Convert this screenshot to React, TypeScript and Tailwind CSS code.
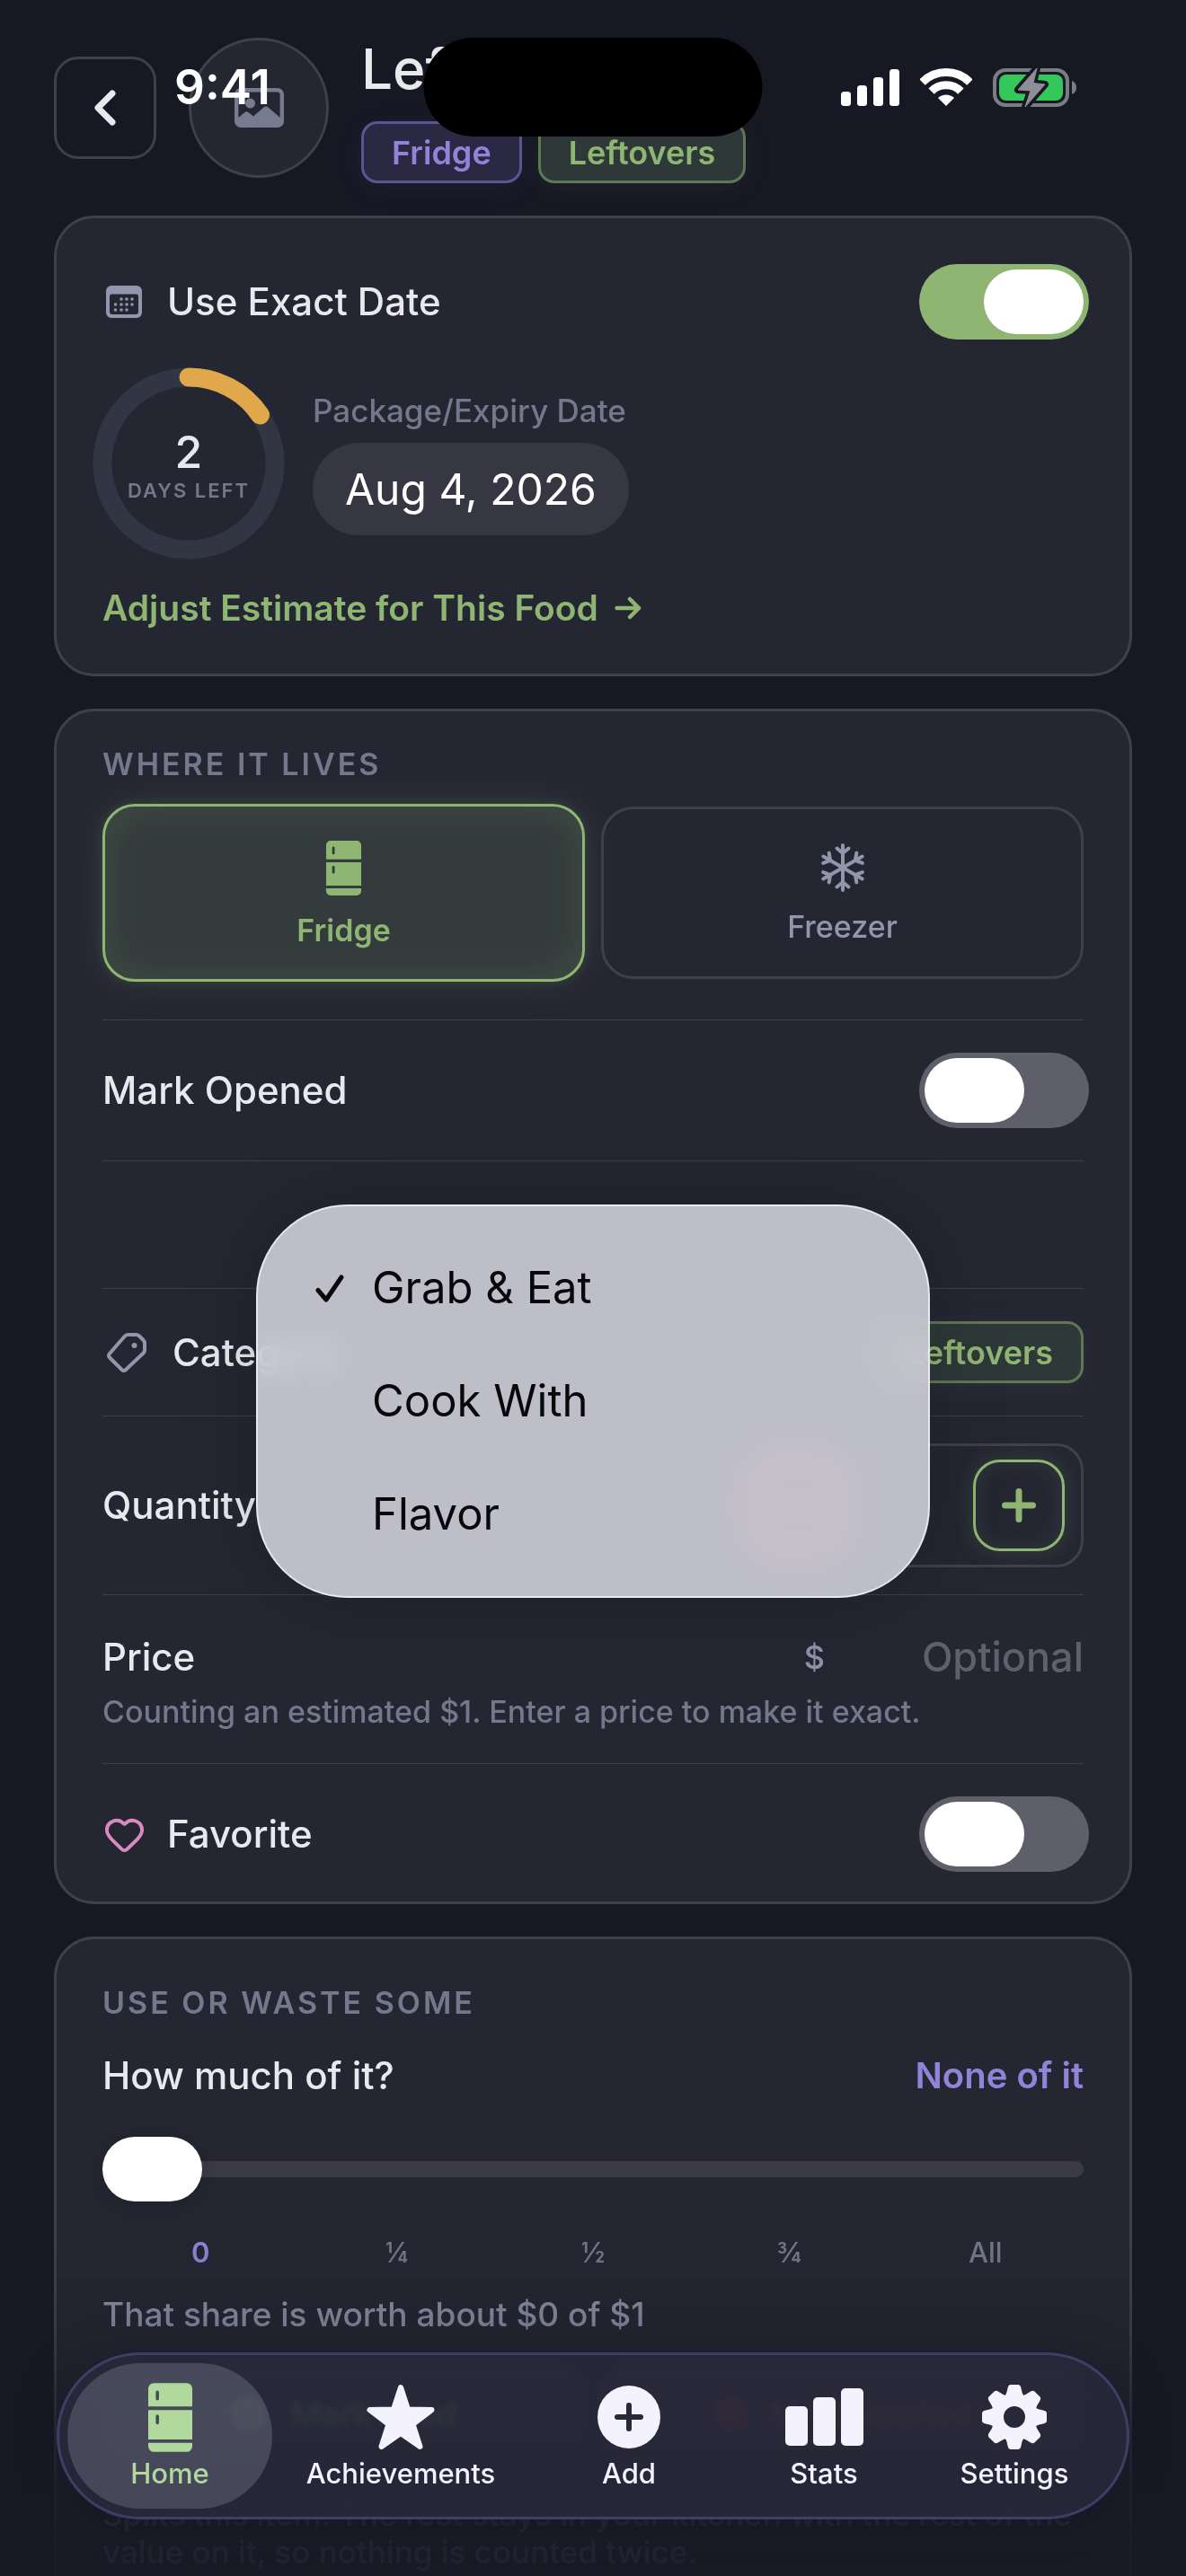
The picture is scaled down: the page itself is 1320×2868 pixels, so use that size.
import { useState } from "react";
import type { ReactNode } from "react";
import { Heart } from "lucide-react";

const MENU_OPTIONS = ["Grab & Eat", "Cook With", "Flavor"];
const SHARE_STEPS = ["0", "¼", "½", "¾", "All"];

function FridgeIcon({ className }: { className: string }) {
  return (
    <svg viewBox="0 0 39 61" className={className} fill="currentColor" fillRule="evenodd" aria-hidden="true">
      <path d="M5 0h29a5 5 0 0 1 5 5v15.7H0V5a5 5 0 0 1 5-5zM6.7 8v6a1.4 1.4 0 0 0 2.8 0V8a1.4 1.4 0 0 0-2.8 0z" />
      <path d="M0 24h39v26H0zM6.7 29.3v6a1.4 1.4 0 0 0 2.8 0v-6a1.4 1.4 0 0 0-2.8 0z" />
      <path d="M0 53h39v3a5 5 0 0 1-5 5H5a5 5 0 0 1-5-5z" />
    </svg>
  );
}

function SnowflakeIcon() {
  return (
    <svg viewBox="-27 -27 54 54" className="h-[54px] w-[54px]" fill="none" stroke="currentColor" strokeWidth="4" strokeLinecap="round" aria-hidden="true">
      {[0, 60, 120, 180, 240, 300].map((angle) => (
        <path key={angle} transform={`rotate(${angle})`} d="M0-1V-25M-6.5-21.5 0-16 6.5-21.5" />
      ))}
    </svg>
  );
}

function PhotoIcon() {
  return (
    <svg viewBox="0 0 55 44" className="h-[44px] w-[55px]" aria-hidden="true">
      <rect x="2.2" y="2.2" width="50.6" height="39.6" rx="5" fill="none" stroke="currentColor" strokeWidth="4.4" />
      <circle cx="17.5" cy="17" r="5.5" fill="currentColor" />
      <path fill="currentColor" d="M3 34 11.5 27Q13.5 25.5 15.5 27L21 31.5 32.5 21.5Q35 19.5 37.5 21.5L52 34v6a3 3 0 0 1-3 2H6a3 3 0 0 1-3-2z" />
    </svg>
  );
}

function CalendarIcon() {
  const dots = [[17, 15], [23, 15], [29, 15], [10.5, 21], [17, 21], [23, 21], [29, 21], [10.5, 27], [17, 27], [23, 27]];
  return (
    <svg viewBox="0 0 40 36" className="h-[36px] w-[40px] text-[#9296ac]" fill="currentColor" aria-hidden="true">
      <path fillRule="evenodd" d="M6 0h28a6 6 0 0 1 6 6v24a6 6 0 0 1-6 6H6a6 6 0 0 1-6-6V6a6 6 0 0 1 6-6zM6.5 9.5a2.5 2.5 0 0 0-2.5 2.5v17a3 3 0 0 0 3 3h26a3 3 0 0 0 3-3V12a2.5 2.5 0 0 0-2.5-2.5z" />
      {dots.map(([x, y]) => (
        <circle key={`${x}-${y}`} cx={x} cy={y} r="1.8" />
      ))}
    </svg>
  );
}

function TagIcon() {
  return (
    <svg viewBox="0 0 44 44" className="h-[44px] w-[54px] text-[#9296ac]" fill="none" stroke="currentColor" strokeWidth="4" strokeLinejoin="round" aria-hidden="true">
      <path d="M23.5 2H32.5Q34.5 2 36 3.5L40.5 8Q42 9.5 42 11.5V19Q42 21 40.5 22.5L21 41Q18.8 43 16.6 41L3 27.5Q1 25.2 3 23L19.5 4Q21.2 2 23.5 2z" />
      <circle cx="30.5" cy="14" r="3" fill="currentColor" stroke="none" />
    </svg>
  );
}

function GearIcon() {
  return (
    <svg viewBox="-36 -36 72 72" className="h-[72px] w-[72px]" aria-hidden="true">
      <circle r="19" fill="none" stroke="currentColor" strokeWidth="14" />
      {[0, 45, 90, 135, 180, 225, 270, 315].map((angle) => (
        <path key={angle} transform={`rotate(${angle})`} fill="currentColor" d="M-10.5-23Q-8.5-26-7.5-32-6.8-36-4-36H4Q6.8-36 7.5-32 8.5-26 10.5-23z" />
      ))}
    </svg>
  );
}

function StarIcon() {
  return (
    <svg viewBox="0 0 76 74" className="h-[74px] w-[76px]" fill="currentColor" stroke="currentColor" strokeWidth="6" strokeLinejoin="round" aria-hidden="true">
      <path d="M38 4 46 28.5 72.5 29 51.5 45 59.5 70 38 55 16.5 70 24.5 45 3.5 29 30 28.5z" />
    </svg>
  );
}

function AddIcon() {
  return (
    <svg viewBox="0 0 70 70" className="h-[70px] w-[70px]" aria-hidden="true">
      <circle cx="35" cy="35" r="35" fill="currentColor" />
      <path d="M35 22V48M22 35H48" stroke="#272839" strokeWidth="6" strokeLinecap="round" />
    </svg>
  );
}

function BarsIcon() {
  return (
    <svg viewBox="0 0 87 64" className="h-[64px] w-[87px]" fill="currentColor" aria-hidden="true">
      <rect y="20" width="25" height="44" rx="5" />
      <rect x="31" y="10" width="25" height="54" rx="5" />
      <rect x="62" width="25" height="64" rx="5" />
    </svg>
  );
}

function StatusBar() {
  return (
    <div className="absolute inset-x-0 top-[42px] z-30 flex h-[110px] items-center justify-between pr-[122px] pl-[194px]">
      <span className="text-[53px] leading-[60px] font-semibold text-white">9:41</span>
      <div className="absolute left-1/2 h-[110px] w-[377px] -translate-x-1/2 rounded-full bg-black" />
      <div className="flex items-center gap-[23px]">
        <svg viewBox="0 0 65 41" className="h-[41px] w-[65px]" fill="white" aria-hidden="true">
          <rect y="25" width="11" height="16" rx="3.5" />
          <rect x="18" y="18" width="11" height="23" rx="3.5" />
          <rect x="36" y="9" width="11" height="32" rx="3.5" />
          <rect x="54" width="11" height="41" rx="3.5" />
        </svg>
        <svg viewBox="0 0 58 42" className="h-[42px] w-[58px]" fill="none" stroke="white" strokeWidth="9" aria-hidden="true">
          <path d="M2.5 15.5A37.5 37.5 0 0 1 55.5 15.5" />
          <path d="M12.6 25.6A23.2 23.2 0 0 1 45.4 25.6" />
          <path d="M29 42 20 33A13 13 0 0 1 38 33z" fill="white" stroke="none" />
        </svg>
        <svg viewBox="0 0 93 45" className="h-[45px] w-[93px]" aria-hidden="true">
          <rect x="2" y="3" width="81" height="39" rx="12" fill="none" stroke="#7c7c86" strokeWidth="4" />
          <rect x="7" y="8" width="71" height="29" rx="8" fill="#34c759" />
          <path d="M88 15Q93 17 93 22.5T88 30z" fill="#7c7c86" />
          <path d="M49 1 28 25 42 26 36 44 58 19 45 17.5z" fill="#8e8e96" stroke="#161824" strokeWidth="8" strokeLinejoin="round" />
          <path d="M49 1 28 25 42 26 36 44 58 19 45 17.5z" fill="#8e8e96" stroke="#8e8e96" strokeWidth="1" strokeLinejoin="round" />
        </svg>
      </div>
    </div>
  );
}

function Chip({ tone, children }: { tone: "purple" | "green"; children: ReactNode }) {
  const tones = {
    purple: "border-[#5d558f] bg-[#2a2842] text-[#9184d8] shadow-[0_6px_30px_rgba(145,132,216,0.08)]",
    green: "border-[#5d7852] bg-[#2f3838] text-[#8fb573] shadow-[0_6px_30px_rgba(143,181,115,0.08)]",
  };
  return (
    <span className={`flex h-[69px] items-center rounded-[18px] border-[3px] px-[31px] text-[36px] font-semibold ${tones[tone]}`}>
      {children}
    </span>
  );
}

function Toggle({ id, defaultChecked }: { id: string; defaultChecked?: boolean }) {
  return (
    <input
      id={id}
      type="checkbox"
      role="switch"
      defaultChecked={defaultChecked}
      className="relative -mr-1.5 h-[84px] w-[189px] shrink-0 appearance-none rounded-full bg-[#5f5f6b] before:absolute before:top-1.5 before:left-1.5 before:h-[72px] before:w-[111px] before:rounded-full before:bg-white checked:bg-[#8fb573] checked:before:left-[72px]"
    />
  );
}

function Card({ className, children }: { className: string; children: ReactNode }) {
  return (
    <section className={`rounded-[45px] border-[3px] border-[#3f404c] bg-[#242632] px-[51px] ${className}`}>
      {children}
    </section>
  );
}

function SectionTitle({ children }: { children: ReactNode }) {
  return <h2 className="text-[34px] leading-[39px] font-semibold tracking-[3px] text-[#74788c] uppercase">{children}</h2>;
}

function Row({ className = "py-9", children }: { className?: string; children: ReactNode }) {
  return <div className={`flex items-center justify-between border-t border-[#3d3e4a] ${className}`}>{children}</div>;
}

const labelText = "text-[42px] leading-[48px] font-medium text-[#e9e8ed]";

function RowLabel({ htmlFor, icon, children }: { htmlFor?: string; icon: ReactNode; children: ReactNode }) {
  return (
    <label htmlFor={htmlFor} className={`flex items-center gap-6 ${labelText}`}>
      <span className="flex min-w-12 justify-center">{icon}</span>
      {children}
    </label>
  );
}

function DaysRing() {
  return (
    <div className="relative h-[192px] w-[192px] shrink-0">
      <svg viewBox="-96 -96 192 192" className="h-full w-full overflow-visible" fill="none" strokeWidth="21" aria-hidden="true">
        <circle r="96" stroke="#323543" />
        <path d="M0-96A96 96 0 0 1 79.5-54" stroke="#e0a84a" strokeLinecap="round" />
      </svg>
      <div className="absolute inset-0 flex flex-col items-center pt-[56px]">
        <span className="text-[50px] leading-[54px] font-medium text-[#e9e8ed]">2</span>
        <span className="text-[22px] leading-[33px] font-semibold tracking-[2px] text-[#74788c]">DAYS LEFT</span>
      </div>
    </div>
  );
}

function OptionMenu() {
  const [selected, setSelected] = useState("Grab & Eat");
  return (
    <div
      role="menu"
      className="absolute top-12 left-1/2 z-10 w-[750px] -translate-x-1/2 rounded-[102px] border-2 border-[#e8e8f0] bg-[#d4d4dd]/88 py-7 shadow-[0_0_90px_rgba(0,0,0,0.18)] backdrop-blur-[14px] backdrop-saturate-150"
    >
      {MENU_OPTIONS.map((option) => (
        <button
          key={option}
          role="menuitemradio"
          aria-checked={option === selected}
          onClick={() => setSelected(option)}
          className="flex h-[126px] w-full items-center pl-[64px] text-left text-[49px] text-[#08080a]"
        >
          <span className="w-[63px]">
            {option === selected && (
              <svg viewBox="0 0 32 31" className="h-[31px] w-[32px]" fill="none" stroke="currentColor" strokeWidth="5" strokeLinecap="round" strokeLinejoin="round" aria-hidden="true">
                <path d="M3 17.5 12 28 29 3" />
              </svg>
            )}
          </span>
          {option}
        </button>
      ))}
    </div>
  );
}

function Stepper() {
  const button = "flex h-[102px] w-[102px] items-center justify-center rounded-[30px] border-[3px]";
  return (
    <div className="flex h-[138px] w-[391px] items-center justify-between rounded-[30px] border-[3px] border-[#3f404c] px-[18px]">
      <button aria-label="Decrease" className={`${button} border-[#f0635a] bg-[#f0635a]/10 text-[#f0635a] shadow-[0_0_36px_rgba(240,99,90,0.4),inset_0_0_24px_rgba(240,99,90,0.3)]`}>
        <svg viewBox="0 0 38 38" className="h-[38px] w-[38px]" stroke="currentColor" strokeWidth="7" strokeLinecap="round" aria-hidden="true">
          <path d="M3.5 19H34.5" />
        </svg>
      </button>
      <button aria-label="Increase" className={`${button} border-[#8fb573] text-[#8fb573] shadow-[0_0_24px_rgba(143,181,115,0.18),inset_0_0_24px_rgba(143,181,115,0.12)]`}>
        <svg viewBox="0 0 38 38" className="h-[38px] w-[38px]" stroke="currentColor" strokeWidth="7" strokeLinecap="round" aria-hidden="true">
          <path d="M19 3.5V34.5M3.5 19H34.5" />
        </svg>
      </button>
    </div>
  );
}

function TabBar() {
  const tabs = [
    { name: "Home", icon: <FridgeIcon className="h-[77px] w-[49px]" /> },
    { name: "Achievements", icon: <StarIcon /> },
    { name: "Add", icon: <AddIcon /> },
    { name: "Stats", icon: <BarsIcon /> },
    { name: "Settings", icon: <GearIcon /> },
  ];
  return (
    <nav className="absolute inset-x-[63px] bottom-[63px] z-20 grid grid-cols-[228fr_286fr_222fr_212fr_212fr] rounded-full border-[3px] border-[#3d4066] bg-[#28293b]/85 py-[9px] pr-[19px] pl-[9px] shadow-[0_0_60px_rgba(0,0,0,0.15)] backdrop-blur-[3px]">
      {tabs.map((tab) => (
        <a
          key={tab.name}
          href="#"
          aria-current={tab.name === "Home" ? "page" : undefined}
          className="flex h-[162px] flex-col items-center justify-center gap-1.5 rounded-full text-[#f3f2fd] aria-[current=page]:bg-[#c8cce0]/20 aria-[current=page]:text-[#b1d99d]"
        >
          <span className="flex h-[78px] items-center">{tab.icon}</span>
          <span className="text-[31px] leading-[36px] font-medium">{tab.name}</span>
        </a>
      ))}
    </nav>
  );
}

export default function App() {
  const [place, setPlace] = useState("Fridge");
  const places = [
    { name: "Fridge", icon: <FridgeIcon className="h-[61px] w-[39px]" /> },
    { name: "Freezer", icon: <SnowflakeIcon /> },
  ];

  return (
    <div className="relative h-screen overflow-hidden bg-[#161824] font-['Inter',sans-serif]">
      <StatusBar />

      <main className="flex flex-col gap-9 px-[60px] pt-9">
        <header className="flex items-center gap-9">
          <button aria-label="Back" className="flex h-[114px] w-[114px] items-center justify-center rounded-[27px] border-[3px] border-[#3f404c] text-[#e9e8ed]">
            <svg viewBox="0 0 24 40" className="h-[40px] w-[24px]" fill="none" stroke="currentColor" strokeWidth="7" strokeLinecap="round" strokeLinejoin="round" aria-hidden="true">
              <path d="M20 4 4 20 20 36" />
            </svg>
          </button>
          <div className="flex h-[156px] w-[156px] items-center justify-center rounded-full border-[3px] border-[#3f404c] bg-[#242632] text-[#767b8f]">
            <PhotoIcon />
          </div>
          <div>
            <h1 className="text-[62px] leading-[81px] font-medium text-[#e9e8ed]">Leftovers</h1>
            <div className="mt-[18px] flex gap-[18px]">
              <Chip tone="purple">Fridge</Chip>
              <Chip tone="green">Leftovers</Chip>
            </div>
          </div>
        </header>

        <Card className="flex flex-col gap-[42px] py-[51px]">
          <div className="flex items-center justify-between">
            <RowLabel htmlFor="exact-date" icon={<CalendarIcon />}>Use Exact Date</RowLabel>
            <Toggle id="exact-date" defaultChecked />
          </div>
          <div className="flex items-center gap-[42px]">
            <DaysRing />
            <div className="flex flex-col items-start gap-[15px]">
              <span className="text-[35px] leading-[42px] font-medium text-[#74788c]">Package/Expiry Date</span>
              <button className="h-[103px] rounded-full bg-[#363743] px-9 text-[48px] text-white">Aug 4, 2026</button>
            </div>
          </div>
          <a href="#" className="flex items-center gap-[18px] text-[39px] leading-[45px] font-semibold text-[#8fb573]">
            Adjust Estimate for This Food
            <svg viewBox="0 0 30 26" className="h-[26px] w-[30px]" fill="none" stroke="currentColor" strokeWidth="4.5" strokeLinecap="round" strokeLinejoin="round" aria-hidden="true">
              <path d="M2.5 13H27M17 3 27 13 17 23" />
            </svg>
          </a>
        </Card>

        <Card className="pt-[39px]">
          <SectionTitle>Where it lives</SectionTitle>
          <div className="mt-[25px] mb-[42px] grid grid-cols-2 items-center gap-[18px]">
            {places.map((item) => (
              <button
                key={item.name}
                aria-pressed={place === item.name}
                onClick={() => setPlace(item.name)}
                className="flex h-[192px] flex-col items-center justify-center gap-[18px] rounded-[36px] border-[3px] border-[#3f404c] pt-1 text-[34px] leading-[42px] font-medium text-[#9296ac] aria-pressed:h-[198px] aria-pressed:border-[#8fb573] aria-pressed:bg-[#333b3c] aria-pressed:font-semibold aria-pressed:text-[#8fb573] aria-pressed:shadow-[0_0_45px_rgba(143,181,115,0.14),0_0_12px_rgba(143,181,115,0.16),inset_0_0_45px_rgba(143,181,115,0.16)]"
              >
                {item.icon}
                {item.name}
              </button>
            ))}
          </div>

          <Row>
            <label htmlFor="opened" className={labelText}>Mark Opened</label>
            <Toggle id="opened" />
          </Row>
          <Row className="relative h-[142px]">
            <OptionMenu />
          </Row>
          <Row>
            <RowLabel icon={<TagIcon />}>Category</RowLabel>
            <Chip tone="green">Leftovers</Chip>
          </Row>
          <Row className="py-[30px]">
            <span className={labelText}>Quantity</span>
            <Stepper />
          </Row>
          <div className="border-t border-[#3d3e4a] py-9">
            <div className="flex h-[66px] items-center">
              <label htmlFor="price" className={`grow ${labelText}`}>Price</label>
              <span className="mr-[18px] text-[36px] font-medium text-[#8e92a8]">$</span>
              <input id="price" placeholder="Optional" className="w-[270px] bg-transparent text-right text-[45px] font-medium outline-none placeholder:text-[#5f606c]" />
            </div>
            <p className="mt-[7px] text-[34px] leading-[42px] font-medium text-[#74788c]">
              Counting an estimated $1. Enter a price to make it exact.
            </p>
          </div>
          <Row className="pt-9 pb-[33px]">
            <RowLabel htmlFor="favorite" icon={<Heart className="h-[47px] w-[47px] text-[#d98bbf]" />}>Favorite</RowLabel>
            <Toggle id="favorite" />
          </Row>
        </Card>

        <Card className="py-[51px]">
          <SectionTitle>Use or waste some</SectionTitle>
          <div className="mt-[38px] flex items-center justify-between">
            <label htmlFor="share" className={labelText}>How much of it?</label>
            <span className="text-[40px] leading-[48px] font-semibold text-[#9184d8]">None of it</span>
          </div>
          <div className="mt-11 flex h-[72px] items-center">
            <input
              id="share"
              type="range"
              min={0}
              max={4}
              defaultValue={0}
              className="h-[18px] w-full appearance-none rounded-full bg-[#3b3a46] [&::-webkit-slider-thumb]:h-[72px] [&::-webkit-slider-thumb]:w-[111px] [&::-webkit-slider-thumb]:appearance-none [&::-webkit-slider-thumb]:rounded-full [&::-webkit-slider-thumb]:bg-white [&::-webkit-slider-thumb]:shadow-[0_6px_30px_rgba(0,0,0,0.15)]"
            />
          </div>
          <div className="mt-[39px] grid grid-cols-5 text-center text-[31px] leading-[36px] font-medium text-[#74788c]">
            {SHARE_STEPS.map((step) => (
              <span key={step} className="first:font-semibold first:text-[#9184d8]">{step}</span>
            ))}
          </div>
          <p className="mt-[30px] text-[37px] leading-[42px] font-medium text-[#8e92a8]">That share is worth about $0 of $1</p>
          <div className="mt-9 grid grid-cols-2 gap-[18px] text-[36px] font-semibold">
            <button className="flex h-[108px] items-center justify-center gap-7 rounded-[36px] bg-[#8fb573]/15 text-[#a5dc7c]">
              <span className="h-[39px] w-[39px] rounded-full bg-[#a5dc7c]/70" />
              Mark used
            </button>
            <button className="flex h-[108px] items-center justify-center gap-6 rounded-[36px] bg-[#e07a70]/15 text-[#d8504a]">
              <span className="h-[39px] w-[39px] rounded-full bg-[#d8504a]/70" />
              Mark wasted
            </button>
          </div>
          <p className="mt-9 text-[35px] leading-[42px] font-medium text-[#74788c]">
            Splits this item. The rest stays in your kitchen with the rest of the value on it, so nothing is counted twice.
          </p>
        </Card>
      </main>

      <div className="pointer-events-none absolute inset-x-0 bottom-0 z-10 h-[390px] bg-[linear-gradient(to_bottom,rgba(23,25,37,0)_0%,rgba(23,25,37,0.2)_31%,rgba(23,25,37,0.68)_62%,rgba(23,25,37,0.88)_85%,rgba(23,25,37,0.9)_100%)]" />
      <TabBar />
    </div>
  );
}
